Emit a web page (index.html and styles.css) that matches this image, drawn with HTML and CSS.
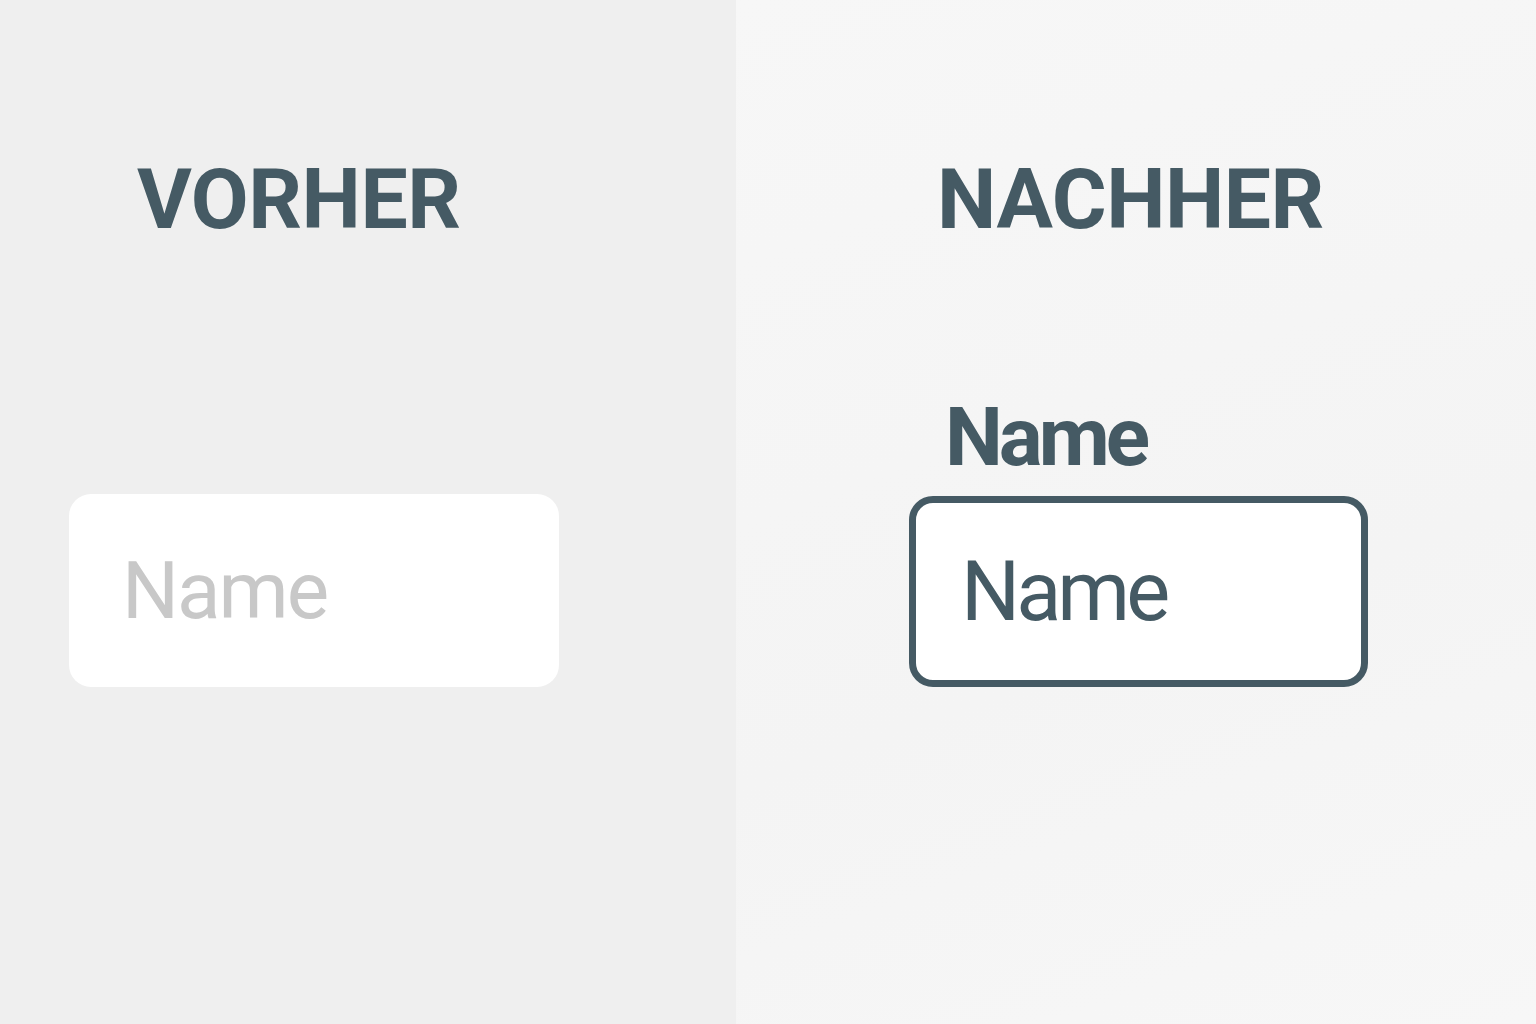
FILE: index.html
```html
<!DOCTYPE html>
<html lang="de">
<head>
  <meta charset="UTF-8" />
  <title>Vorher / Nachher</title>
  <link rel="stylesheet" href="styles.css">
</head>
<body>
  <div class="compare">
    <section class="panel before">
      <h1 class="panel-title">VORHER</h1>
      <div class="field">
        <input type="text" class="input input-plain" placeholder="Name" />
      </div>
    </section>

    <section class="panel after">
      <h1 class="panel-title">NACHHER</h1>
      <div class="field">
        <label class="field-label" for="nameInput">Name</label>
        <input type="text" id="nameInput" class="input input-outlined" value="Name" />
      </div>
    </section>
  </div>
</body>
</html>
```

FILE: styles.css
```css
html, body {
  margin: 0;
  height: 100%;
}

body {
  font-family: Roboto, 'Liberation Sans', Arial, sans-serif;
  color: #455a64;
}

.compare {
  display: flex;
  height: 100vh;
}

.panel {
  display: flex;
  flex-direction: column;
  box-sizing: border-box;
}

.before {
  width: 736px;
  background-color: #efefef;
  padding: 158px 0 0 69px;
}

.after {
  flex: 1;
  background: linear-gradient(160deg, #f7f7f7 0%, #f4f4f4 60%, #f7f7f7 100%);
  padding: 158px 0 0 173px;
}

.panel-title {
  margin: 0;
  font-family: Roboto, 'Liberation Sans', sans-serif;
  font-weight: 700;
  font-size: 84px;
  line-height: 1;
  letter-spacing: -0.5px;
}

.before .panel-title {
  margin-left: 68px;
}

.after .panel-title {
  margin-left: 28px;
}

.before .field {
  margin-top: 252px;
}

.after .field {
  margin-top: 154px;
  display: flex;
  flex-direction: column;
}

.field-label {
  margin-left: 36px;
  font-weight: 700;
  font-size: 82px;
  letter-spacing: -4px;
  line-height: 1;
  margin-bottom: 18px;
}

.input {
  box-sizing: border-box;
  font-family: Roboto, 'Liberation Sans', Arial, sans-serif;
  outline: none;
}

.input-plain {
  width: 490px;
  height: 193px;
  padding: 0 0 0 53px;
  border: none;
  border-radius: 22px;
  background: #fff;
  font-size: 80px;
  letter-spacing: -2px;
}

.input-plain::placeholder {
  color: #c8c8c8;
}

.input-outlined {
  width: 459px;
  height: 191px;
  padding: 0 0 0 45px;
  border: 7px solid #455a64;
  border-radius: 24px;
  background: #fff;
  color: #455a64;
  font-size: 83px;
  letter-spacing: -4px;
}
```
